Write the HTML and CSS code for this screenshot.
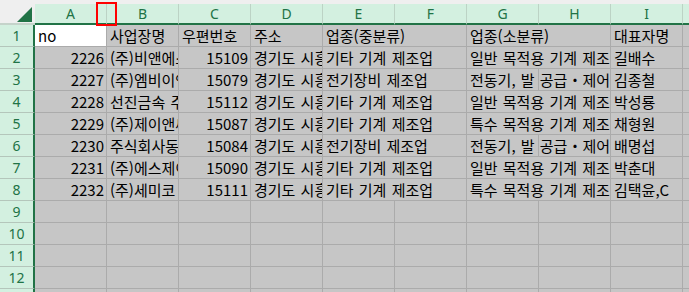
FILE: index.html
```html
<!DOCTYPE html>
<html lang="ko">
<head>
  <meta charset="utf-8">
  <title>Sheet1</title>
  <link rel="stylesheet" href="styles.css">
</head>
<body>
  <div class="sheet">
    <!-- column headers -->
    <div class="corner"><svg width="35" height="19" viewBox="0 0 35 19"><polygon points="17,18 32,3 32,18" fill="#217346"/></svg></div>
    <div class="ch">A</div><div class="ch">B</div><div class="ch">C</div><div class="ch">D</div><div class="ch">E</div><div class="ch">F</div><div class="ch">G</div><div class="ch">H</div><div class="ch">I</div><div class="ch"></div>

    <!-- row 1 -->
    <div class="rh">1</div>
    <div class="c active">no</div>
    <div class="c">사업장명</div>
    <div class="c">우편번호</div>
    <div class="c">주소</div>
    <div class="c s2"><span class="w">업종(중분류)</span></div>
    <div class="c s2"><span class="w">업종(소분류)</span></div>
    <div class="c">대표자명</div>
    <div class="c"></div>

    <div class="rh">2</div>
    <div class="c n">2226</div>
    <div class="c">(주)비앤에스</div>
    <div class="c n">15109</div>
    <div class="c">경기도 시흥시</div>
    <div class="c s2"><span class="w">기타</span> <span class="w">기계</span> <span class="w">제조업</span></div>
    <div class="c s2"><span class="w">일반</span> <span class="w">목적용</span> <span class="w">기계</span> <span class="w">제조업</span></div>
    <div class="c">길배수</div>
    <div class="c"></div>

    <div class="rh">3</div>
    <div class="c n">2227</div>
    <div class="c">(주)엠비이엔지</div>
    <div class="c n">15079</div>
    <div class="c">경기도 시흥시</div>
    <div class="c s2"><span class="w">전기장비</span> <span class="w">제조업</span></div>
    <div class="c s2"><span class="w">전동기,</span> <span class="w">발</span> <span class="w">공급・제어</span></div>
    <div class="c">김종철</div>
    <div class="c"></div>

    <div class="rh">4</div>
    <div class="c n">2228</div>
    <div class="c">선진금속 주식회사</div>
    <div class="c n">15112</div>
    <div class="c">경기도 시흥시</div>
    <div class="c s2"><span class="w">기타</span> <span class="w">기계</span> <span class="w">제조업</span></div>
    <div class="c s2"><span class="w">일반</span> <span class="w">목적용</span> <span class="w">기계</span> <span class="w">제조업</span></div>
    <div class="c">박성룡</div>
    <div class="c"></div>

    <div class="rh">5</div>
    <div class="c n">2229</div>
    <div class="c">(주)제이앤씨</div>
    <div class="c n">15087</div>
    <div class="c">경기도 시흥시</div>
    <div class="c s2"><span class="w">기타</span> <span class="w">기계</span> <span class="w">제조업</span></div>
    <div class="c s2"><span class="w">특수</span> <span class="w">목적용</span> <span class="w">기계</span> <span class="w">제조업</span></div>
    <div class="c">채형원</div>
    <div class="c"></div>

    <div class="rh">6</div>
    <div class="c n">2230</div>
    <div class="c">주식회사동아</div>
    <div class="c n">15084</div>
    <div class="c">경기도 시흥시</div>
    <div class="c s2"><span class="w">전기장비</span> <span class="w">제조업</span></div>
    <div class="c s2"><span class="w">전동기,</span> <span class="w">발</span> <span class="w">공급・제어</span></div>
    <div class="c">배명섭</div>
    <div class="c"></div>

    <div class="rh">7</div>
    <div class="c n">2231</div>
    <div class="c">(주)에스제이</div>
    <div class="c n">15090</div>
    <div class="c">경기도 시흥시</div>
    <div class="c s2"><span class="w">기타</span> <span class="w">기계</span> <span class="w">제조업</span></div>
    <div class="c s2"><span class="w">일반</span> <span class="w">목적용</span> <span class="w">기계</span> <span class="w">제조업</span></div>
    <div class="c">박춘대</div>
    <div class="c"></div>

    <div class="rh">8</div>
    <div class="c n">2232</div>
    <div class="c">(주)세미코</div>
    <div class="c n">15111</div>
    <div class="c">경기도 시흥시</div>
    <div class="c s2"><span class="w">기타</span> <span class="w">기계</span> <span class="w">제조업</span></div>
    <div class="c s2"><span class="w">특수</span> <span class="w">목적용</span> <span class="w">기계</span> <span class="w">제조업</span></div>
    <div class="c">김택윤,C</div>
    <div class="c"></div>

    <!-- empty rows -->
    <div class="rh">9</div>
    <div class="c"></div><div class="c"></div><div class="c"></div><div class="c"></div><div class="c"></div><div class="c"></div><div class="c"></div><div class="c"></div><div class="c"></div><div class="c"></div>
    <div class="rh">10</div>
    <div class="c"></div><div class="c"></div><div class="c"></div><div class="c"></div><div class="c"></div><div class="c"></div><div class="c"></div><div class="c"></div><div class="c"></div><div class="c"></div>
    <div class="rh">11</div>
    <div class="c"></div><div class="c"></div><div class="c"></div><div class="c"></div><div class="c"></div><div class="c"></div><div class="c"></div><div class="c"></div><div class="c"></div><div class="c"></div>
    <div class="rh">12</div>
    <div class="c"></div><div class="c"></div><div class="c"></div><div class="c"></div><div class="c"></div><div class="c"></div><div class="c"></div><div class="c"></div><div class="c"></div><div class="c"></div>
    <div class="rh">13</div>
    <div class="c"></div><div class="c"></div><div class="c"></div><div class="c"></div><div class="c"></div><div class="c"></div><div class="c"></div><div class="c"></div><div class="c"></div><div class="c"></div>
  </div>

  <!-- highlight box over the A/B column divider -->
  <div class="mark"></div>
</body>
</html>
```

FILE: styles.css
```css
html, body {
  margin: 0;
  padding: 0;
  height: 100%;
  overflow: hidden;
}

body {
  background: #efefef;
  padding-top: 4px;
  box-sizing: border-box;
  position: relative;
}

.sheet {
  display: grid;
  grid-template-columns: 35px repeat(9, 72px) 1fr;
  grid-template-rows: 21px;
  grid-auto-rows: 22px;
}

/* headers */
.corner {
  background: #efefef;
  border-bottom: 2px solid #c5d3ca;
  box-sizing: border-box;
}

.corner svg {
  display: block;
}

.ch {
  background: #d3f0e0;
  border-right: 1px solid #bcd3c5;
  border-bottom: 2px solid #217346;
  box-sizing: border-box;
  text-align: center;
  font-family: "Noto Sans", sans-serif;
  font-size: 14px;
  line-height: 19px;
  color: #217346;
}

.rh {
  background: #d3f0e0;
  border-right: 2px solid #217346;
  border-bottom: 1px solid #b4c6bb;
  box-sizing: border-box;
  text-align: center;
  font-family: "Noto Sans", sans-serif;
  font-size: 14px;
  line-height: 21px;
  color: #217346;
}

/* cells */
.c {
  background: #c6c6c6;
  border-right: 1px solid #ababab;
  border-bottom: 1px solid #ababab;
  box-sizing: border-box;
  padding: 0 3px;
  font-family: "Noto Sans CJK KR", sans-serif;
  font-size: 15px;
  line-height: 21px;
  word-spacing: 1px;
  color: #000;
  white-space: nowrap;
  overflow: hidden;
}

.c.n {
  text-align: right;
  padding-right: 2px;
}

.c.active {
  background: #fff;
}

/* text overflowing into the empty neighbour column */
.c.s2 {
  grid-column: span 2;
  background: linear-gradient(to right, transparent 71px, #ababab 71px, #ababab 72px, transparent 72px), #c6c6c6;
}

.w {
  background: #c6c6c6;
}

.mark {
  position: absolute;
  left: 96px;
  top: 2px;
  width: 21px;
  height: 24px;
  border: 2px solid #ff0000;
  box-sizing: border-box;
}
```
